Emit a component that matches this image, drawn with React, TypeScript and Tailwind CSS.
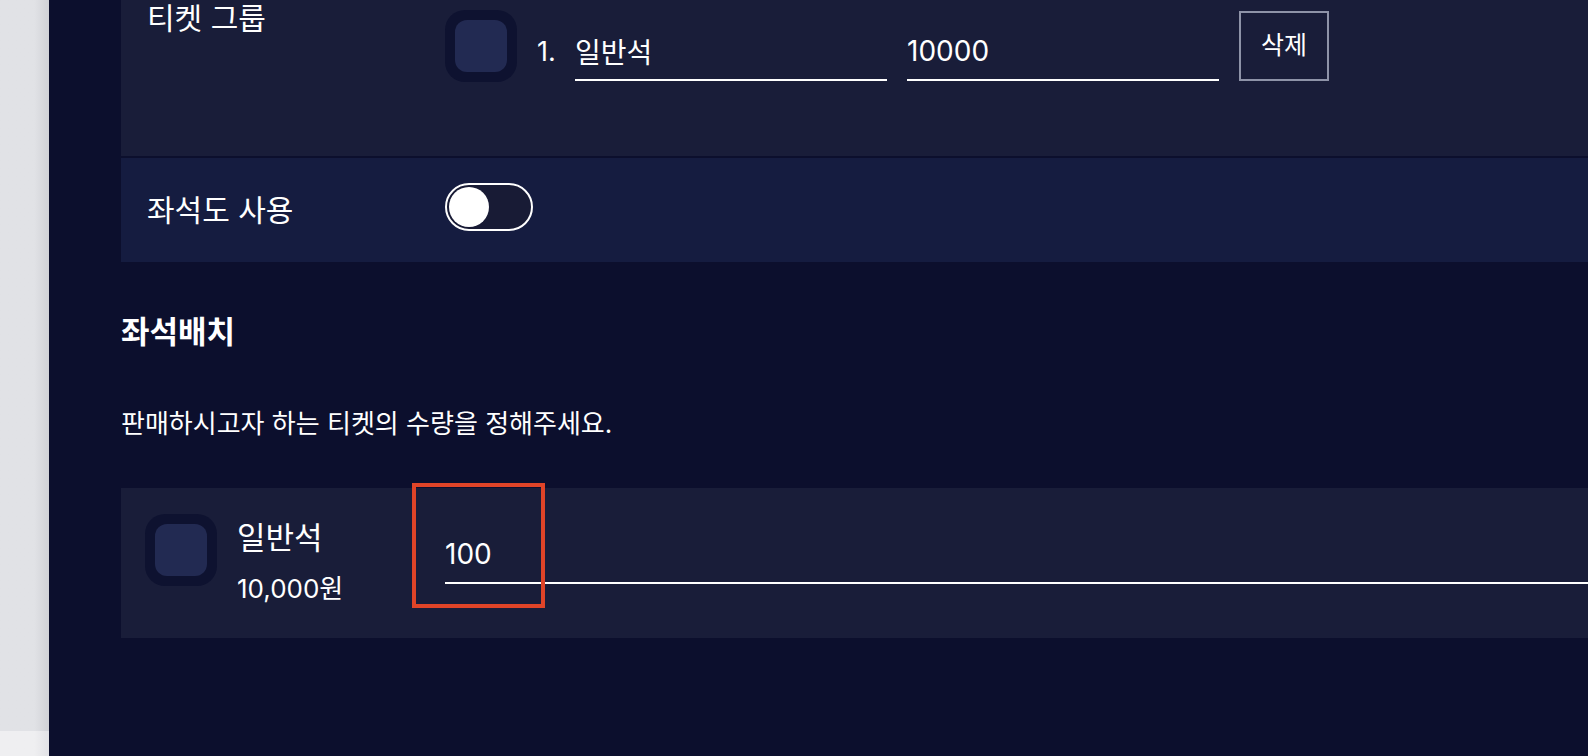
import { useState } from 'react';

const font = { fontFamily: 'Inter, "Noto Sans CJK KR", sans-serif' };

function ColorSwatch() {
  return (
    <div className="w-[72px] h-[72px] shrink-0 rounded-[20px] bg-[#0e1230] p-[10px]">
      <div className="w-full h-full rounded-[12px] bg-[#222a52]" />
    </div>
  );
}

function Toggle() {
  const [on, setOn] = useState(false);
  return (
    <button
      onClick={() => setOn(!on)}
      className={`w-[88px] h-[48px] -mt-[6px] rounded-full border-2 border-white bg-[#181b35] p-[2px] flex ${on ? 'justify-end' : 'justify-start'}`}
    >
      <span className="w-[40px] h-[40px] rounded-full bg-white" />
    </button>
  );
}

export default function App() {
  const [name, setName] = useState('일반석');
  const [price, setPrice] = useState('10000');
  const [count, setCount] = useState('100');

  return (
    <div className="flex w-full h-[756px] overflow-hidden text-white" style={font}>
      <div className="w-[49px] shrink-0 flex flex-col">
        <div className="flex-1 bg-linear-to-r from-[#e1e2e6] from-70% to-[#d0d1d6]" />
        <div className="h-[25px] bg-linear-to-r from-[#efeff1] from-70% to-[#e2e2e6]" />
      </div>

      <main className="flex-1 bg-[#0c0f2d] pl-[72px] overflow-hidden">
        {/* ticket settings card */}
        <div className="flex flex-col gap-[2px]">
          <div className="flex h-[156px] bg-[#191d39] pl-[26px]">
            <div className="w-[298px] shrink-0 text-[30px] leading-none mt-[3px]">티켓 그룹</div>
            <div className="flex items-start pt-[10px]">
              <ColorSwatch />
              <span className="w-[38px] ml-[20px] text-[27px] leading-[40px] mt-[22px]">1.</span>
              <input
                value={name}
                onChange={(e) => setName(e.target.value)}
                className="w-[312px] h-[58px] mt-[13px] bg-transparent border-b-2 border-white text-[28px] outline-none"
              />
              <input
                value={price}
                onChange={(e) => setPrice(e.target.value)}
                className="w-[312px] h-[58px] mt-[13px] ml-[20px] bg-transparent border-b-2 border-white text-[28px] outline-none"
              />
              <button className="w-[90px] h-[70px] mt-[1px] ml-[20px] border-2 border-[#8e93a8] text-[25px]">
                삭제
              </button>
            </div>
          </div>
          <div className="flex items-center h-[104px] bg-[#151c40] pl-[26px]">
            <div className="w-[298px] shrink-0 text-[30px]">좌석도 사용</div>
            <Toggle />
          </div>
        </div>

        <h2 className="mt-[50px] text-[31px] leading-[40px] font-bold">좌석배치</h2>
        <p className="mt-[54px] text-[26px] leading-[36px]">판매하시고자 하는 티켓의 수량을 정해주세요.</p>

        {/* seat quantity card */}
        <div className="relative mt-[46px] h-[150px] bg-[#191d39] pl-[24px] pt-[26px] flex items-start">
          <ColorSwatch />
          <div className="w-[208px] ml-[20px] mt-[6px] flex flex-col">
            <span className="text-[31px] leading-[36px]">일반석</span>
            <span className="text-[26px] leading-[32px] mt-[17px]">10,000원</span>
          </div>
          <input
            value={count}
            onChange={(e) => setCount(e.target.value)}
            className="flex-1 h-[48px] mt-[22px] pb-[10px] bg-transparent border-b-2 border-white text-[28px] outline-none"
          />
          <div className="absolute left-[291px] -top-[5px] w-[133px] h-[125px] border-4 border-[#e04428] pointer-events-none" />
        </div>
      </main>
    </div>
  );
}
